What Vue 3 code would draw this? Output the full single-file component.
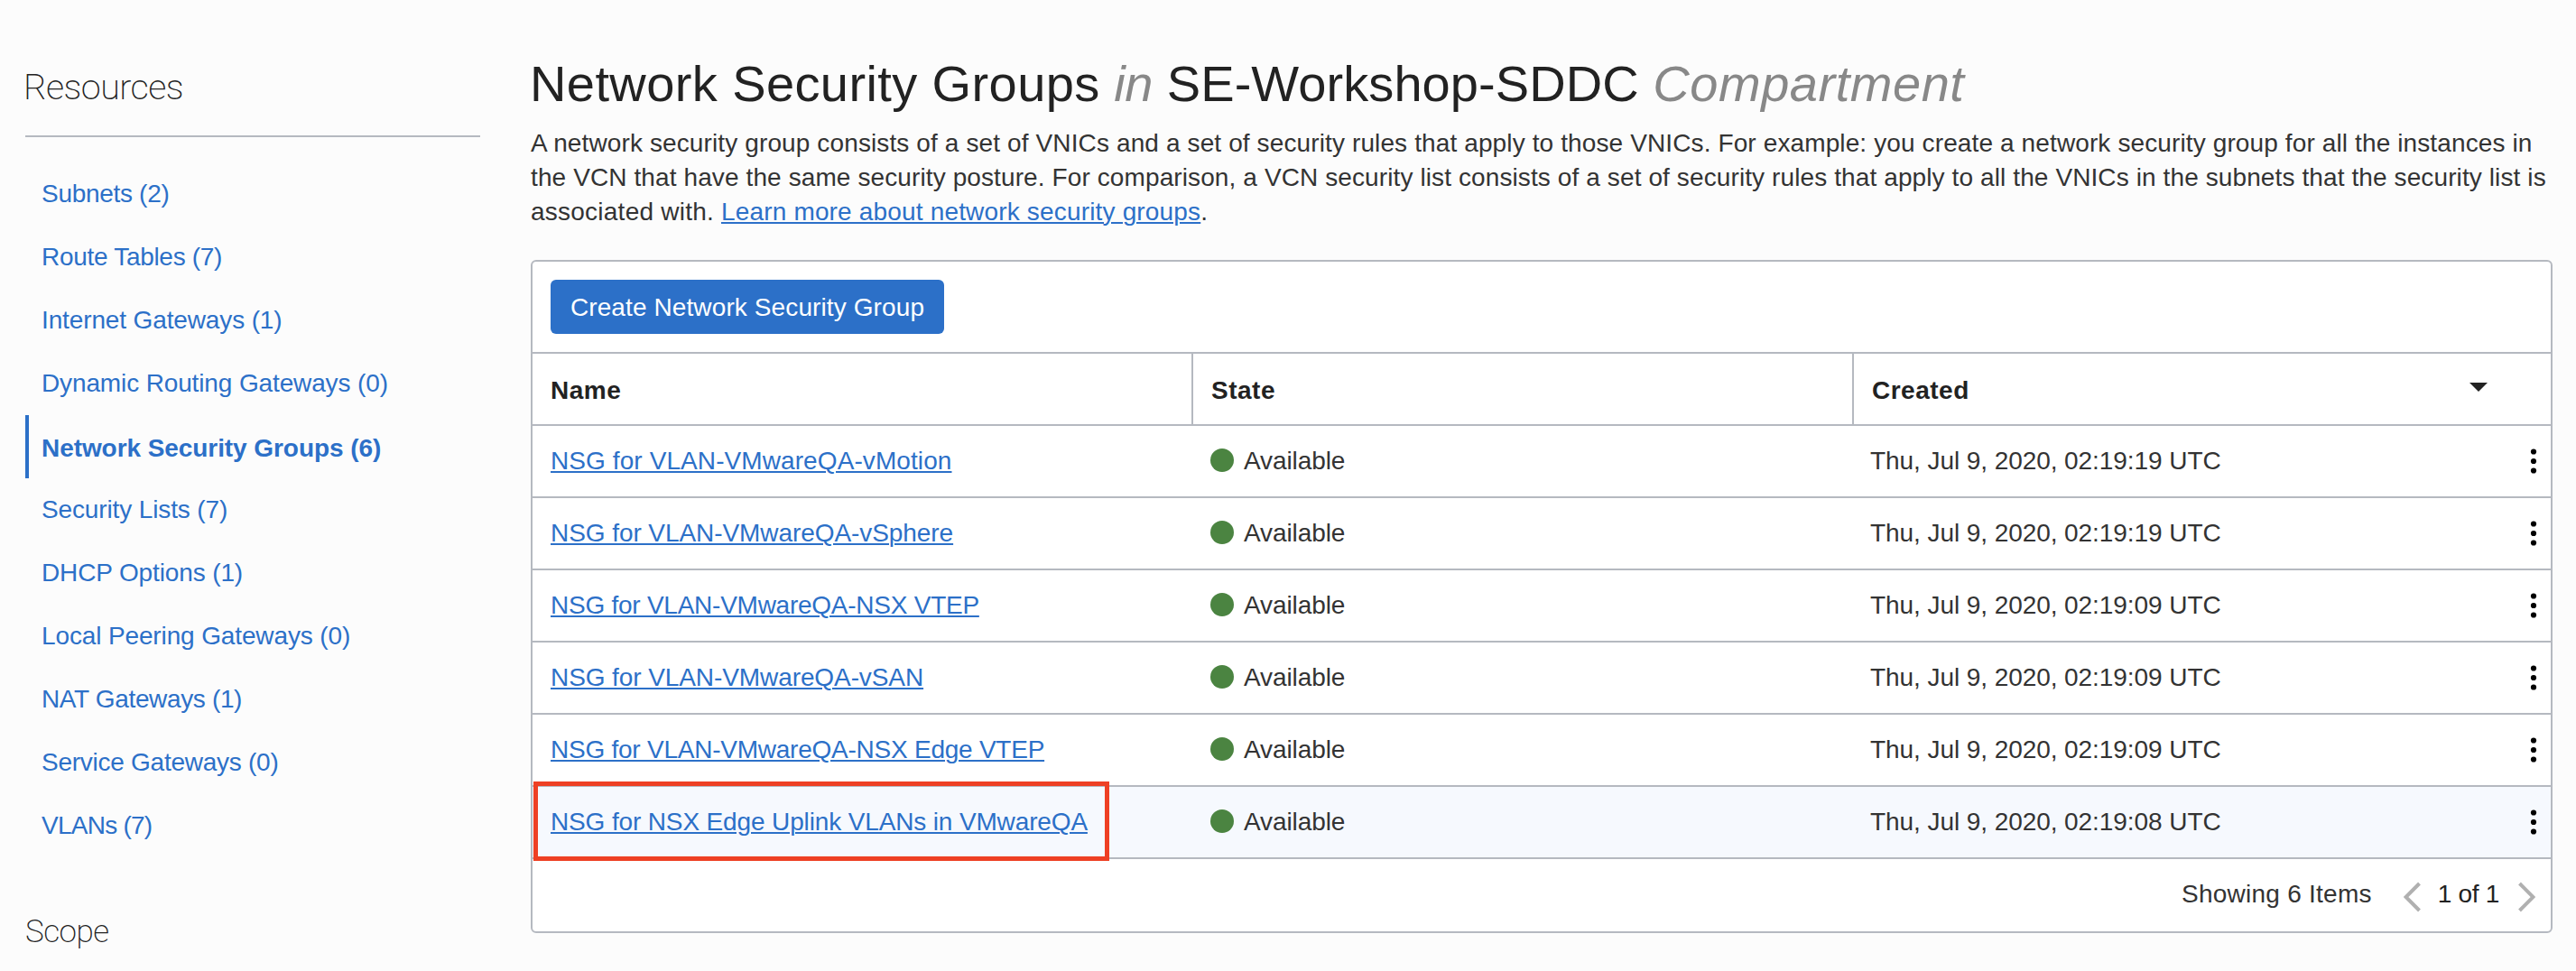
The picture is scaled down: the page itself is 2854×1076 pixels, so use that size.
<script setup>
const resources = [
  { label: 'Subnets', count: 2 },
  { label: 'Route Tables', count: 7 },
  { label: 'Internet Gateways', count: 1 },
  { label: 'Dynamic Routing Gateways', count: 0 },
  { label: 'Network Security Groups', count: 6, active: true },
  { label: 'Security Lists', count: 7 },
  { label: 'DHCP Options', count: 1 },
  { label: 'Local Peering Gateways', count: 0 },
  { label: 'NAT Gateways', count: 1 },
  { label: 'Service Gateways', count: 0 },
  { label: 'VLANs', count: 7 },
]

const groups = [
  { name: 'NSG for VLAN-VMwareQA-vMotion', created: 'Thu, Jul 9, 2020, 02:19:19 UTC' },
  { name: 'NSG for VLAN-VMwareQA-vSphere', created: 'Thu, Jul 9, 2020, 02:19:19 UTC' },
  { name: 'NSG for VLAN-VMwareQA-NSX VTEP', created: 'Thu, Jul 9, 2020, 02:19:09 UTC' },
  { name: 'NSG for VLAN-VMwareQA-vSAN', created: 'Thu, Jul 9, 2020, 02:19:09 UTC' },
  { name: 'NSG for VLAN-VMwareQA-NSX Edge VTEP', created: 'Thu, Jul 9, 2020, 02:19:09 UTC' },
  { name: 'NSG for NSX Edge Uplink VLANs in VMwareQA', created: 'Thu, Jul 9, 2020, 02:19:08 UTC', highlighted: true },
]
</script>

<template>
  <div class="page">
    <aside class="sidebar">
      <h2 class="side-title">Resources</h2>
      <ul class="nav">
        <li v-for="item in resources" :key="item.label" class="nav-item" :class="{ active: item.active }">
          <a class="nav-link">{{ item.label }} ({{ item.count }})</a>
        </li>
      </ul>
      <h2 class="scope-title">Scope</h2>
    </aside>

    <main class="main">
      <h1 class="title">
        <span class="t-groups">Network Security Groups</span> <em class="t-in">in</em> <span class="t-name">SE-Workshop-SDDC</span> <em class="t-comp">Compartment</em>
      </h1>
      <p class="intro">
        A network security group consists of a set of VNICs and a set of security rules that apply to those VNICs. For example: you create a network security group for all the instances in<br>
        <span class="intro-mid">the VCN that have the same security posture. For comparison, a VCN security list consists of a set of security rules that apply to all the VNICs in the subnets that the security list is</span><br>
        <span class="intro-end">associated with.</span> <a class="link learn">Learn more about network security groups</a>.
      </p>

      <section class="card">
        <div class="toolbar">
          <button class="create" type="button">Create Network Security Group</button>
        </div>
        <div class="row head">
          <div class="cell">Name</div>
          <div class="cell">State</div>
          <div class="cell sortable">
            <span>Created</span>
            <svg class="sort" width="20" height="10" viewBox="0 0 20 10"><path d="M0 0H20L10 10Z" fill="#222" /></svg>
          </div>
        </div>
        <div class="body">
          <div v-for="g in groups" :key="g.name" class="row" :class="{ highlighted: g.highlighted }">
            <div class="cell"><a class="link name">{{ g.name }}</a></div>
            <div class="cell state"><i class="dot"></i><span>Available</span></div>
            <div class="cell created">
              <span>{{ g.created }}</span>
              <svg class="kebab" width="6" height="28" viewBox="0 0 6 28">
                <circle cx="3" cy="3.5" r="3.1" /><circle cx="3" cy="14" r="3.1" /><circle cx="3" cy="24.5" r="3.1" />
              </svg>
            </div>
            <div v-if="g.highlighted" class="marker"></div>
          </div>
        </div>
        <footer class="footer">
          <span class="showing">Showing 6 Items</span>
          <svg class="chev prev" width="20" height="34" viewBox="0 0 20 34"><path d="M17.5 2L2.5 17L17.5 32" /></svg>
          <span class="page-of">1 of 1</span>
          <svg class="chev next" width="20" height="34" viewBox="0 0 20 34"><path d="M2.5 2L17.5 17L2.5 32" /></svg>
        </footer>
      </section>
    </main>
  </div>
</template>

<style>
body {
  background: #fcfcfc;
}
</style>

<style scoped>
.page {
  display: flex;
  box-sizing: border-box;
  width: 2854px;
  height: 1076px;
  overflow: hidden;
  padding-left: 28px;
  background: #fcfcfc;
  color: #333;
  font: 28px/38px "Liberation Sans", Arial, sans-serif;
}

/* sidebar */
.sidebar {
  flex: none;
  width: 504px;
  padding-top: 73px;
}
.side-title,
.scope-title {
  margin: 0;
  color: #222;
  font-family: Roboto, sans-serif;
  font-weight: 200;
}
.side-title {
  padding-bottom: 30px;
  border-bottom: 2px solid #b5b9c0;
  font-size: 39.5px;
  line-height: 47px;
  letter-spacing: -0.55px;
  text-indent: -2px;
}
.scope-title {
  margin-top: 62px;
  font-size: 35px;
  line-height: 42px;
  letter-spacing: -0.5px;
  text-indent: 0;
}
.nav {
  margin: 28px 0 0;
  padding: 0;
  list-style: none;
}
.nav-item {
  box-sizing: border-box;
  height: 70px;
  padding-left: 18px;
  line-height: 69px;
  letter-spacing: -0.13px;
}
.nav-item:nth-child(-n+2) { letter-spacing: -0.3px; }
.nav-item:nth-child(9) { letter-spacing: -0.35px; }
.nav-item:nth-child(10) { letter-spacing: -0.26px; }
.nav-item:nth-child(11) { letter-spacing: -0.75px; }
.nav-item.active {
  padding-left: 14px;
  border-left: 4px solid #2c70c8;
  font-weight: bold;
  line-height: 73px;
  letter-spacing: -0.07px;
}
.nav-link {
  color: #2c70c8;
}

/* main column */
.main {
  flex: none;
  width: 2240px;
  margin-left: 56px;
  padding-top: 61px;
}
.title {
  margin: 0 0 16px;
  color: #222;
  font-size: 56px;
  font-weight: normal;
  line-height: 63px;
  white-space: nowrap;
  text-indent: -1px;
}
.title em { color: #888; }
.t-groups { letter-spacing: 0.4px; }
.t-in { letter-spacing: -0.3px; }
.t-name { letter-spacing: 0.08px; }
.t-comp { letter-spacing: 0.53px; }
.intro {
  margin: 0 0 34px;
  letter-spacing: 0.12px;
  white-space: nowrap;
}
.intro-mid { letter-spacing: 0.107px; }
.intro-end { letter-spacing: 0.24px; }
.link {
  color: #2c70c8;
  text-decoration: underline;
  text-decoration-thickness: 2px;
  text-underline-offset: 2px;
}
.learn { letter-spacing: 0.17px; }

/* table card */
.card {
  box-sizing: border-box;
  height: 746px;
  border: 2px solid #b5b9c0;
  border-radius: 6px;
  background: #fff;
}
.toolbar {
  height: 60px;
  padding: 20px;
  border-bottom: 2px solid #b5b9c0;
}
.create {
  width: 436px;
  height: 60px;
  padding: 1px 0 0;
  border: 0;
  border-radius: 6px;
  background: #2c70c8;
  color: #fff;
  font: inherit;
  letter-spacing: 0.11px;
}
.row {
  position: relative;
  display: grid;
  grid-template-columns: 730px 732px 774px;
  height: 78px;
  border-bottom: 2px solid #b5b9c0;
  line-height: 77px;
}
.cell {
  box-sizing: border-box;
  padding-left: 20px;
  white-space: nowrap;
}
.head {
  color: #222;
  font-weight: bold;
  line-height: 75px;
  letter-spacing: 0.5px;
}
.head .cell { padding-top: 3px; }
.head .cell + .cell {
  padding-left: 20px;
  border-left: 2px solid #b5b9c0;
}
.sortable {
  display: flex;
  justify-content: space-between;
}
.sort {
  margin: 29px 70px 0 0;
}
.state {
  display: flex;
  align-items: flex-start;
  padding-left: 21px;
  letter-spacing: -0.1px;
}
.dot {
  width: 26px;
  height: 26px;
  margin: 25px 11px 0 0;
  border-radius: 50%;
  background: #4b8441;
}
.created {
  display: flex;
  justify-content: space-between;
  letter-spacing: -0.07px;
}
.kebab {
  margin: 25px 16px 0 0;
  overflow: visible;
}
.highlighted { background: #f6f9fe; }
.row:nth-child(1) .name { letter-spacing: 0.09px; }
.row:nth-child(2) .name { letter-spacing: -0.07px; }
.row:nth-child(3) .name { letter-spacing: -0.25px; }
.row:nth-child(4) .name { letter-spacing: -0.09px; }
.row:nth-child(5) .name { letter-spacing: -0.24px; }
.row:nth-child(6) .name { letter-spacing: -0.14px; }
.marker {
  position: absolute;
  top: -6px;
  left: 1px;
  box-sizing: border-box;
  width: 638px;
  height: 88px;
  border: 5px solid #ee4024;
}

/* pagination */
.footer {
  display: flex;
  justify-content: flex-end;
  height: 80px;
  padding-right: 17px;
  line-height: 77px;
}
.showing {
  margin-right: 35px;
  letter-spacing: 0.25px;
}
.page-of {
  margin: 0 20px 0 18px;
  color: #222;
  letter-spacing: -0.3px;
}
.chev {
  margin-top: 25px;
  fill: none;
  stroke: #b0b0b0;
  stroke-width: 4;
}
</style>
